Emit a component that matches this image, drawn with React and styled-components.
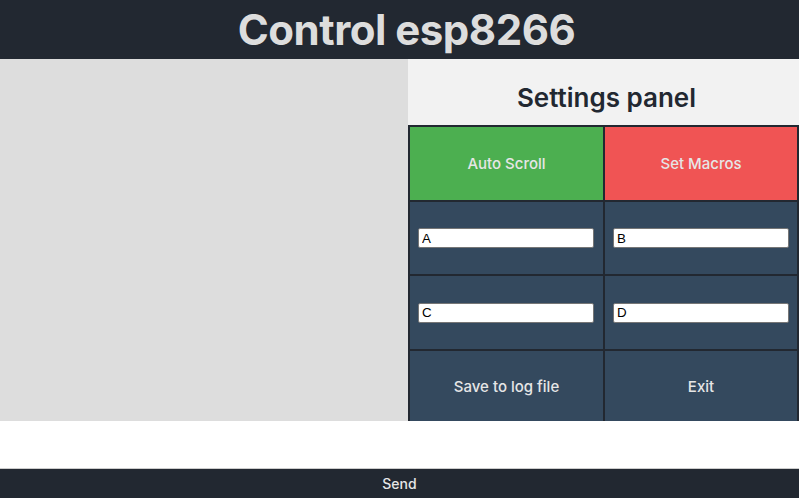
import React from "react";
import styled, { createGlobalStyle } from "styled-components";

const GlobalStyle = createGlobalStyle`
  body {
    margin: 0;
    font-family: "Inter", "Liberation Sans", sans-serif;
    background: #ffffff;
  }
`;

function App() {
  return (
    <>
      <GlobalStyle />
      <Page>
        <Header>
          <h1>Control esp8266</h1>
        </Header>
        <Main>
          <Log />
          <Panel>
            <PanelTitle>Settings panel</PanelTitle>
            <Grid>
              <Cell $bg="#4caf50">
                <CellButton>Auto Scroll</CellButton>
              </Cell>
              <Cell $bg="#f05454">
                <CellButton>Set Macros</CellButton>
              </Cell>
              <Cell>
                <MacroInput defaultValue="A" />
              </Cell>
              <Cell>
                <MacroInput defaultValue="B" />
              </Cell>
              <Cell>
                <MacroInput defaultValue="C" />
              </Cell>
              <Cell>
                <MacroInput defaultValue="D" />
              </Cell>
              <Cell>
                <CellButton>Save to log file</CellButton>
              </Cell>
              <Cell>
                <CellButton>Exit</CellButton>
              </Cell>
            </Grid>
          </Panel>
        </Main>
        <Message />
        <SendButton>Send</SendButton>
      </Page>
    </>
  );
}

const Page = styled.div`
  display: flex;
  flex-direction: column;
  height: 498px;
  overflow: hidden;
`;

const Header = styled.header`
  height: 59px;
  background: #222831;
  display: flex;
  align-items: center;
  justify-content: center;
  padding-left: 14px;
  h1 {
    margin: 0;
    color: #dddddd;
    font-size: 42px;
    font-weight: 700;
    letter-spacing: -0.5px;
  }
`;

const Main = styled.div`
  display: flex;
  height: 362px;
  overflow: hidden;
`;

const Log = styled.div`
  width: 408px;
  flex-shrink: 0;
  background: #dddddd;
`;

const Panel = styled.div`
  flex: 1;
  display: flex;
  flex-direction: column;
  background: #f2f2f2;
`;

const PanelTitle = styled.h2`
  margin: 0;
  height: 66px;
  flex-shrink: 0;
  box-sizing: border-box;
  padding: 24px 0 0 6px;
  text-align: center;
  color: #222831;
  font-size: 26px;
  font-weight: 600;
  line-height: 30px;
`;

const Grid = styled.div`
  display: grid;
  grid-template-columns: 193px 192px;
  grid-auto-rows: 72.5px;
  gap: 2px;
  padding: 2px;
  background: #222831;
`;

const Cell = styled.div`
  background: ${(p) => p.$bg || "#34495e"};
  display: flex;
  align-items: center;
  justify-content: flex-start;
`;

const CellButton = styled.button`
  all: unset;
  width: 100%;
  height: 100%;
  text-align: center;
  color: #e6e6e6;
  font-family: "Inter", "Liberation Sans", sans-serif;
  font-size: 15px;
  font-weight: 500;
  cursor: pointer;
`;

const MacroInput = styled.input`
  width: 176px;
  height: 20px;
  margin: 1px 0 0 8px;
  box-sizing: border-box;
  border: 1px solid #767676;
  border-radius: 2px;
  padding: 1px 3px;
  font-family: "Liberation Sans", Arial, sans-serif;
  font-size: 13.33px;
  color: #000000;
  background: #ffffff;
`;

const Message = styled.div`
  height: 47px;
  flex-shrink: 0;
  background: #ffffff;
  border-bottom: 1px solid #cccccc;
`;

const SendButton = styled.button`
  all: unset;
  flex: 1;
  background: #222831;
  color: #e6e6e6;
  text-align: center;
  font-family: "Inter", "Liberation Sans", sans-serif;
  font-size: 14px;
  font-weight: 500;
  cursor: pointer;
`;

export default App;
